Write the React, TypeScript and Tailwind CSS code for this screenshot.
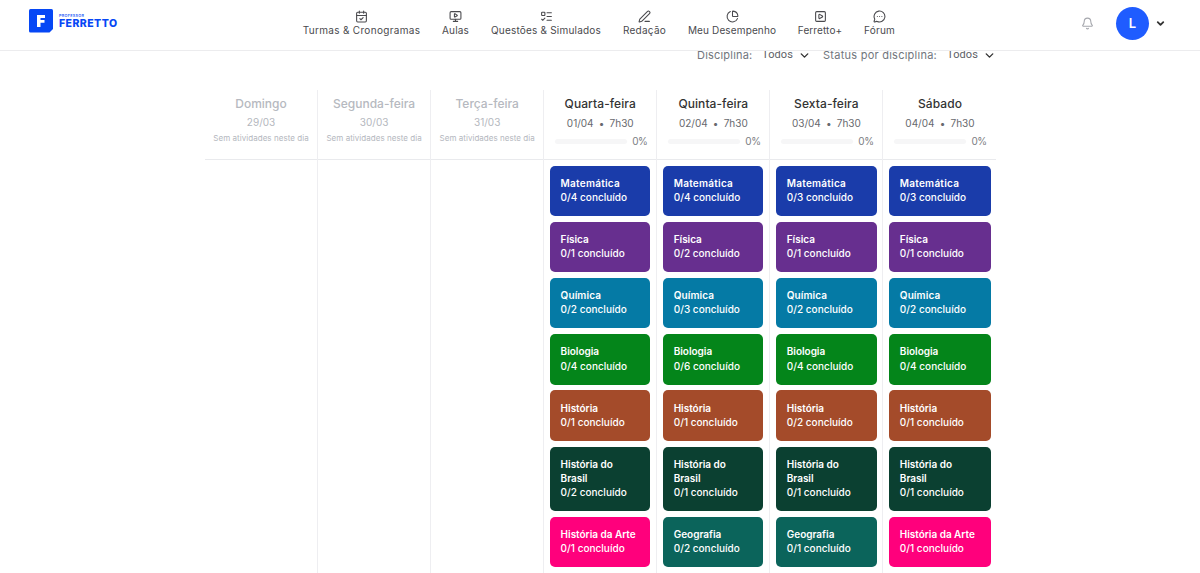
import type { ReactNode } from "react";
import { Bell, CalendarCheck, ChartPie, ChevronDown, ListTodo, MessageCircle, MonitorPlay, PenLine, SquarePlay } from "lucide-react";

const iconClass = "block h-[13px] w-[13px]";

const nav: { label: string; width: string; tracking: string; icon: ReactNode }[] = [
  { label: "Turmas & Cronogramas", width: "w-[117px]", tracking: "tracking-[0.31px]", icon: <CalendarCheck className={iconClass} /> },
  { label: "Aulas", width: "w-[27px]", tracking: "tracking-[0.2px]", icon: <MonitorPlay className={iconClass} /> },
  { label: "Questões & Simulados", width: "w-[110px]", tracking: "tracking-[0.2px]", icon: <ListTodo className={iconClass} /> },
  { label: "Redação", width: "w-[43px]", tracking: "tracking-[0.25px]", icon: <PenLine className={iconClass} /> },
  { label: "Meu Desempenho", width: "w-[88px]", tracking: "tracking-[0.14px]", icon: <ChartPie className={iconClass} /> },
  { label: "Ferretto+", width: "w-[44px]", tracking: "tracking-[0.1px]", icon: <SquarePlay className={iconClass} /> },
  {
    label: "Fórum",
    width: "w-[31px]",
    tracking: "tracking-[0.2px]",
    icon: (
      <span className="relative block">
        <MessageCircle className={iconClass} />
        <svg viewBox="0 0 24 24" className="absolute inset-0 h-[13px] w-[13px]" fill="currentColor">
          <circle cx="8" cy="12" r="1" />
          <circle cx="12.2" cy="12" r="1" />
          <circle cx="16.4" cy="12" r="1" />
        </svg>
      </span>
    ),
  },
];

const colors: Record<string, string> = {
  Matemática: "bg-[#1a3caa]",
  Física: "bg-[#672f8f]",
  Química: "bg-[#057aa5]",
  Biologia: "bg-[#04851a]",
  História: "bg-[#a44b2a]",
  "História do Brasil": "bg-[#0b4031]",
  "História da Arte": "bg-[#ff007c]",
  Geografia: "bg-[#0b645b]",
};

const subjectTracking: Record<string, string> = {
  Matemática: "tracking-[0.25px]",
  Química: "tracking-[0.1px]",
  Geografia: "tracking-[0px]",
};

type Day = { name: string; date: string; items?: [string, number][] };

const base = (m: number, f: number, q: number, b: number, h: number, hb: number): [string, number][] => [
  ["Matemática", m],
  ["Física", f],
  ["Química", q],
  ["Biologia", b],
  ["História", h],
  ["História do Brasil", hb],
];

const days: Day[] = [
  { name: "Domingo", date: "29/03" },
  { name: "Segunda-feira", date: "30/03" },
  { name: "Terça-feira", date: "31/03" },
  { name: "Quarta-feira", date: "01/04", items: [...base(4, 1, 2, 4, 1, 2), ["História da Arte", 1]] },
  { name: "Quinta-feira", date: "02/04", items: [...base(4, 2, 3, 6, 1, 1), ["Geografia", 2]] },
  { name: "Sexta-feira", date: "03/04", items: [...base(3, 1, 2, 4, 2, 1), ["Geografia", 1]] },
  { name: "Sábado", date: "04/04", items: [...base(3, 1, 2, 4, 1, 1), ["História da Arte", 1]] },
];

function Logo() {
  return (
    <div className="flex items-start">
      <svg viewBox="0 0 24 24" className="h-6 w-6">
        <path d="M1.5 0H22.5Q24 0 24 1.5V20L20.5 23.5H1.5Q0 23.5 0 22V1.5Q0 0 1.5 0Z" fill="#0647f5" />
        <path d="M8 6H16V9H11.5V11H15.5V13.8H11.5V18H8Z" fill="#fff" />
      </svg>
      <div className="ml-[6px] flex flex-col whitespace-nowrap pt-[5px] text-[#0647f5]">
        <span className="text-[3.8px] font-medium leading-[4px] tracking-[0.3px]">PROFESSOR</span>
        <span className="text-[10.5px] font-extrabold leading-[11px] tracking-[0.45px]">FERRETTO</span>
      </div>
    </div>
  );
}

function Header() {
  return (
    <header className="relative z-10 flex h-[51px] shrink-0 border-b border-[#ececee] bg-white text-[#4a4a4e]">
      <div className="w-[303px] pl-[29px] pt-[9px]">
        <Logo />
      </div>
      <nav className="flex gap-[22px] pt-[10px]">
        {nav.map((n) => (
          <a key={n.label} className={`flex flex-col items-center ${n.width}`}>
            {n.icon}
            <span className={`whitespace-nowrap text-[10px] leading-[15px] ${n.tracking}`}>{n.label}</span>
          </a>
        ))}
      </nav>
      <div className="ml-auto flex h-[47px] items-center pr-[34px]">
        <Bell className="h-[13px] w-[13px] text-[#a5a7ad]" />
        <span className="ml-[22px] flex h-[33px] w-[33px] items-center justify-center rounded-full bg-[#1f5cff] text-[13px] font-semibold text-white">
          L
        </span>
        <ChevronDown className="ml-[6px] h-[11px] w-[11px] text-[#333] [stroke-width:4]" />
      </div>
    </header>
  );
}

function Filter({ label, labelClass }: { label: string; labelClass: string }) {
  return (
    <div className="flex items-center">
      <span className={`whitespace-nowrap text-[11px] text-[#71767d] ${labelClass}`}>{label}</span>
      <span className="w-[36px] font-[Roboto] text-[11px] tracking-[0.1px] text-[#5c6066]">Todos</span>
      <ChevronDown className="h-[13px] w-[13px] text-[#333] [stroke-width:2.6]" />
    </div>
  );
}

function DayHeader({ day }: { day: Day }) {
  const active = !!day.items;
  return (
    <div className="flex h-[70px] flex-col items-center border-b border-[#e9eaed] whitespace-nowrap">
      <div className={`mt-[5px] text-[12px] font-medium leading-[18px] ${active ? "tracking-[0.08px] text-[#333]" : "tracking-[0px] text-[#b6b9c0]"}`}>
        {day.name}
      </div>
      {active ? (
        <>
          <div className="mt-[2px] flex text-[10px] leading-[16px] text-[#67696e]">
            <span>{day.date}</span>
            <span className="w-[16px] text-center">•</span>
            <span>7h30</span>
          </div>
          <div className="mt-[3px] flex h-[15px] w-full items-center pl-[11px]">
            <span className="h-[5px] w-[72px] rounded-full bg-[#f6f6f7]" />
            <span className="ml-[5px] text-[10px] tracking-[-0.4px] text-[#7b7d82]">0%</span>
          </div>
        </>
      ) : (
        <>
          <div className="mt-[2px] text-[10px] leading-[15px] text-[#b4b7be]">{day.date}</div>
          <div className="text-[8px] leading-[16px] tracking-[0.04px] text-[#b4b7be]">Sem atividades neste dia</div>
        </>
      )}
    </div>
  );
}

function Card({ name, total }: { name: string; total: number }) {
  return (
    <div className={`rounded-[5px] px-[11px] pb-[11.7px] pt-[10.3px] text-[10px] leading-[14.2px] text-white ${colors[name]}`}>
      <div className={`font-semibold ${subjectTracking[name] ?? "tracking-[-0.02px]"}`}>
        {name === "História do Brasil" ? (
          <>
            História do
            <br />
            Brasil
          </>
        ) : (
          name
        )}
      </div>
      <div className="whitespace-nowrap font-medium tracking-[0.02px]">0/{total} concluído</div>
    </div>
  );
}

export default function App() {
  return (
    <div className="flex h-[573px] w-[1200px] flex-col overflow-hidden bg-white font-[Inter,sans-serif]">
      <Header />
      <div className="-mt-[4px] flex h-[16px] shrink-0 items-center gap-[12px] pl-[697px]">
        <Filter label="Disciplina:" labelClass="w-[65px] tracking-[0.2px]" />
        <Filter label="Status por disciplina:" labelClass="w-[124px] tracking-[0.25px]" />
      </div>
      <main className="ml-[205px] mt-[27px] grid w-[791.5px] flex-1 grid-cols-7">
        {days.map((d, i) => (
          <section key={d.name} className={i < 6 ? "border-r border-[#eeeef1]" : ""}>
            <DayHeader day={d} />
            {d.items && (
              <div className="flex flex-col gap-[5.8px] pl-[5.4px] pr-[5.9px] pt-[5.6px]">
                {d.items.map(([name, total]) => (
                  <Card key={name} name={name} total={total} />
                ))}
              </div>
            )}
          </section>
        ))}
      </main>
    </div>
  );
}
